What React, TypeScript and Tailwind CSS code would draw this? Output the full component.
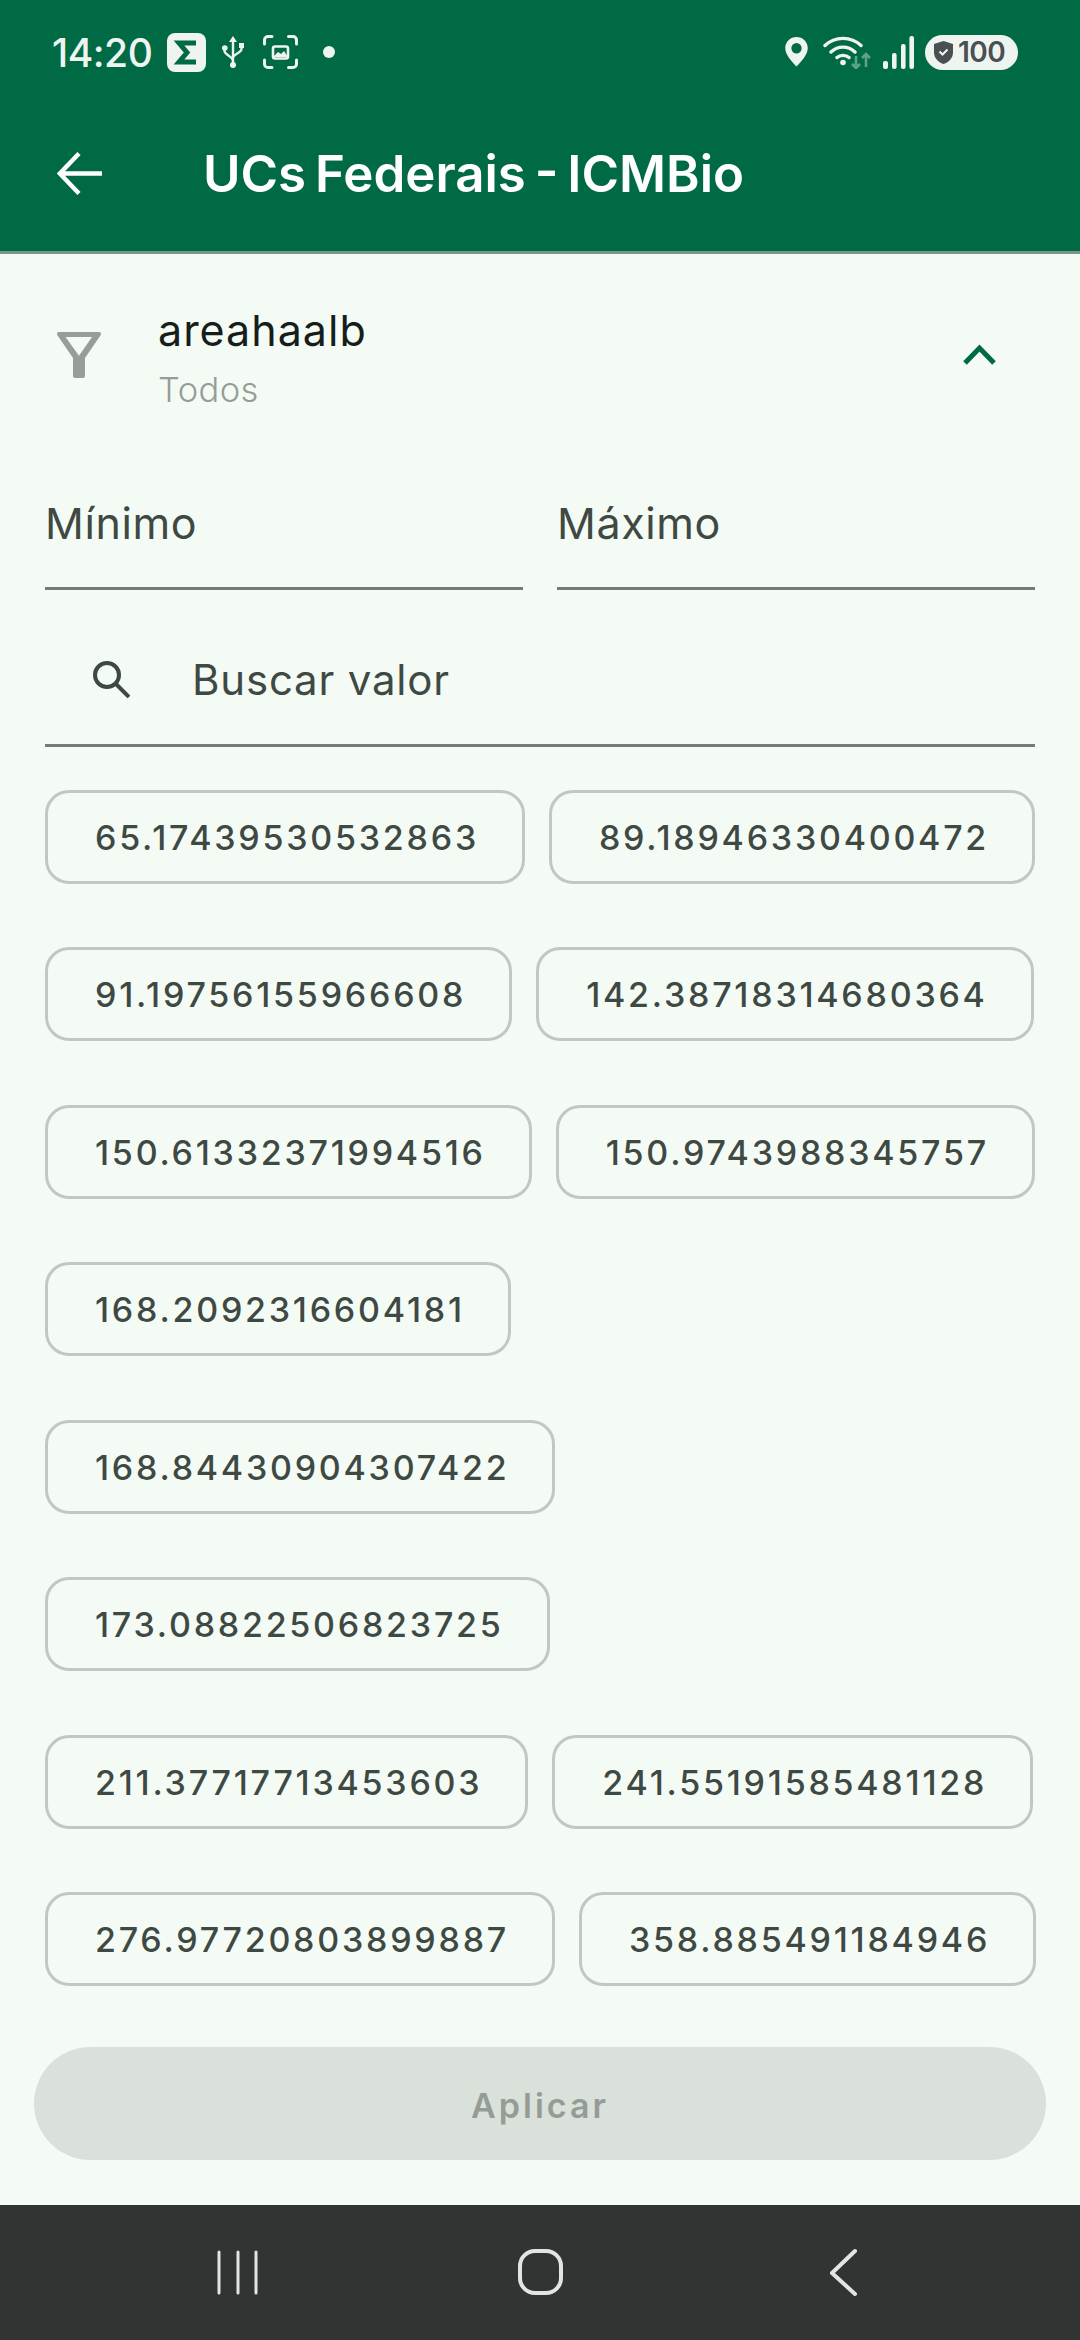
const rows = [
  ["65.17439530532863", "89.18946330400472"],
  ["91.19756155966608", "142.38718314680364"],
  ["150.61332371994516", "150.9743988345757"],
  ["168.2092316604181"],
  ["168.84430904307422"],
  ["173.08822506823725"],
  ["211.37717713453603", "241.55191585481128"],
  ["276.97720803899887", "358.885491184946"],
];

function StatusBar() {
  return (
    <div className="flex h-[104px] items-center justify-between pl-[52px] pr-[62px] text-[#eef4f0]">
      <div className="flex items-center">
        <span className="font-['Inter'] text-[39px] font-medium leading-none tracking-[-0.5px]">14:20</span>
        <svg width="39" height="39" viewBox="0 0 39 39" className="ml-[15px]">
          <rect width="39" height="39" rx="8" fill="#eef4f0" />
          <path d="M29 10H12l8 9.500L12 29h17" fill="none" stroke="#006a45" strokeWidth="5" />
        </svg>
        <svg width="22" height="32" viewBox="0 0 22 32" className="ml-[16px]" fill="none" stroke="#eef4f0" strokeWidth="2.400">
          <path d="M11 4v24M2.500 12v3c0 4 8.500 5 8.500 10M19.500 11v2c0 4-8.500 5-8.500 9" />
          <path d="M11 0l4 6H7z" fill="#eef4f0" stroke="none" />
          <circle cx="2.800" cy="12" r="2.800" fill="#eef4f0" stroke="none" />
          <rect x="17" y="7" width="5" height="5" fill="#eef4f0" stroke="none" />
          <circle cx="11" cy="29" r="3" fill="#eef4f0" stroke="none" />
        </svg>
        <svg width="35" height="34" viewBox="0 0 35 34" className="ml-[19px]" fill="none" stroke="#eef4f0" strokeWidth="3" strokeLinecap="round">
          <path d="M1.500 9V5a3.500 3.500 0 0 1 3.500-3.500h4M25.500 1.500H30A3.500 3.500 0 0 1 33.500 5v4M33.500 25v4a3.500 3.500 0 0 1-3.500 3.500h-4.500M9 32.500H5A3.500 3.500 0 0 1 1.500 29v-4" />
          <rect x="10" y="11.500" width="15" height="12" rx="2" strokeWidth="2.600" />
          <path d="M10 22l5-5 3 2 3-3 4 6z" fill="#eef4f0" stroke="none" />
        </svg>
        <span className="ml-[25px] h-[12px] w-[12px] rounded-full bg-[#eef4f0]" />
      </div>
      <div className="flex items-center">
        <svg width="23" height="30" viewBox="0 0 24 32">
          <path fillRule="evenodd" d="M12 0c6.600 0 12 5.200 12 11.800 0 7-6.500 14-12 19.700C6.500 25.800 0 18.800 0 11.800 0 5.200 5.400 0 12 0zm0 6.500a5.500 5.500 0 1 0 0 11 5.500 5.500 0 0 0 0-11z" fill="#eef4f0" />
        </svg>
        <svg width="48" height="33" viewBox="0 0 48 33" className="ml-[15px]" fill="none" stroke="#eef4f0" strokeWidth="3.400" strokeLinecap="round">
          <path d="M2 9.500C12 0 28 0 38 9.500M8 16C15 9.500 25 9.500 32 16M14 21.500c3-2.800 9-2.800 12 0" />
          <circle cx="20" cy="26.500" r="2.800" fill="#eef4f0" stroke="none" />
          <path d="M33 20v12M29 28l4 4 4-4M43 31V18M39 22l4-4 4 4" stroke="#5fa386" strokeWidth="2.600" strokeLinecap="butt" />
        </svg>
        <svg width="31" height="33" viewBox="0 0 31 33" className="ml-[12px]" fill="#eef4f0">
          <rect x="0" y="25" width="5" height="8" rx="2" />
          <rect x="9" y="17" width="4.600" height="16" rx="2" />
          <rect x="18" y="8" width="4.600" height="25" rx="2" />
          <rect x="26.400" y="0" width="4.600" height="33" rx="2" />
        </svg>
        <div className="ml-[11px] flex h-[35px] w-[93px] items-center rounded-full bg-[#eef4f0] pl-[9px]">
          <svg width="19" height="23" viewBox="0 0 19 23">
            <path d="M9.500 0l9.500 3v8c0 6-4 10-9.500 12C4 21 0 17 0 11V3z" fill="#4a4f52" />
            <path d="M5.500 10.500l3 3 5-5" fill="none" stroke="#eef4f0" strokeWidth="2" />
          </svg>
          <span className="ml-[5px] font-['Inter'] text-[28px] font-semibold leading-none tracking-[-0.5px] text-[#4a4f52]">100</span>
        </div>
      </div>
    </div>
  );
}

function TopBar() {
  return (
    <div className="bg-[#006a45]">
      <StatusBar />
      <div className="flex h-[147px] items-center pb-[9px] pl-[57px]">
        <svg width="45" height="45" viewBox="0 0 45 45" fill="none" stroke="#ffffff" strokeWidth="4.500">
          <path d="M45 22.500H4M22 2.500L2.800 22.500 22 42.500" />
        </svg>
        <h1 className="ml-[101px] font-['Inter'] text-[51px] font-semibold leading-none [word-spacing:-4px] text-white">UCs Federais - ICMBio</h1>
      </div>
      <div className="h-[3px] bg-[#7d9488]" />
    </div>
  );
}

function FilterHeader() {
  return (
    <div className="flex h-[200px] items-center pl-[57px] pr-[84px]">
      <svg width="44" height="46" viewBox="0 0 44 46" className="mt-[2px] shrink-0">
        <path fillRule="evenodd" d="M2 0h40a2 2 0 0 1 1.600 3.200L28 26v18a2 2 0 0 1-2 2h-8a2 2 0 0 1-2-2V26L.4 3.200A2 2 0 0 1 2 0zM8.500 5L22 23.700 35 5z" fill="#979d98" />
      </svg>
      <div className="ml-[57px] mt-[7px] flex flex-1 flex-col">
        <span className="font-['Inter'] text-[43px] leading-[50px] tracking-[1px] text-[#171d1a]">areahaalb</span>
        <span className="mt-[15px] font-['Inter'] text-[34.5px] font-light leading-[40px] tracking-[0.4px] text-[#969c97]">Todos</span>
      </div>
      <svg width="33" height="21" viewBox="0 0 33 21" fill="none" stroke="#006a45" strokeWidth="5" className="mt-[2px] shrink-0">
        <path d="M2 19L16.500 4 31 19" />
      </svg>
    </div>
  );
}

function Chip({ value }: { value: string }) {
  return (
    <div className="flex h-[94px] items-center rounded-[24px] border-[3px] border-[#bfc9c2] pl-[47px] pr-[43px] pt-[2px] font-['Inter'] text-[34px] font-[550] leading-none tracking-[2.75px] text-[#3f4944]">
      {value}
    </div>
  );
}

export default function App() {
  return (
    <div className="flex h-[2340px] w-[1080px] flex-col overflow-hidden bg-[#f4fbf4]">
      <TopBar />
      <FilterHeader />
      <div className="mt-[36px] flex gap-[34px] px-[45px]">
        <div className="flex h-[100px] flex-1 items-center border-b-[3px] border-[#747c76] pb-[30px] font-['Inter'] text-[43px] tracking-[0.6px] text-[#3f4944]">Mínimo</div>
        <div className="flex h-[100px] flex-1 items-center border-b-[3px] border-[#747c76] pb-[30px] font-['Inter'] text-[43px] tracking-[0.6px] text-[#3f4944]">Máximo</div>
      </div>
      <div className="mx-[45px] flex h-[157px] items-center border-b-[3px] border-[#747c76] pl-[48px] pt-[26px]">
        <svg width="37" height="37" viewBox="0 0 37 37" fill="none" stroke="#3f4944" strokeWidth="4">
          <circle cx="14" cy="14" r="12" />
          <path d="M23 23l13 13" />
        </svg>
        <span className="ml-[62px] font-['Inter'] text-[42px] tracking-[0.8px] text-[#3f4944]">Buscar valor</span>
      </div>
      <div className="mt-[43px] flex flex-col gap-[63.5px] px-[45px]">
        {rows.map((row) => (
          <div key={row[0]} className="flex gap-[24px]">
            {row.map((value) => (
              <Chip key={value} value={value} />
            ))}
          </div>
        ))}
      </div>
      <div className="mx-[34px] mt-[61px] flex h-[113px] items-center justify-center rounded-full bg-[#d9e1da] pt-[3px] font-['Inter'] text-[34px] font-semibold tracking-[3px] text-[#959c96]">
        Aplicar
      </div>
      <div className="mt-[45px] h-[135px] bg-[#323333]">
        <svg width="1080" height="135" viewBox="0 0 1080 135" fill="none" stroke="#e4e4e4" strokeWidth="3" strokeLinecap="round" strokeLinejoin="round">
          <path d="M219 47v41M238 47v41M256 47v41" />
          <rect x="520" y="46" width="41" height="42" rx="15" strokeWidth="4" />
          <path d="M855 46l-23 22 23 21" strokeWidth="4" />
        </svg>
      </div>
    </div>
  );
}
